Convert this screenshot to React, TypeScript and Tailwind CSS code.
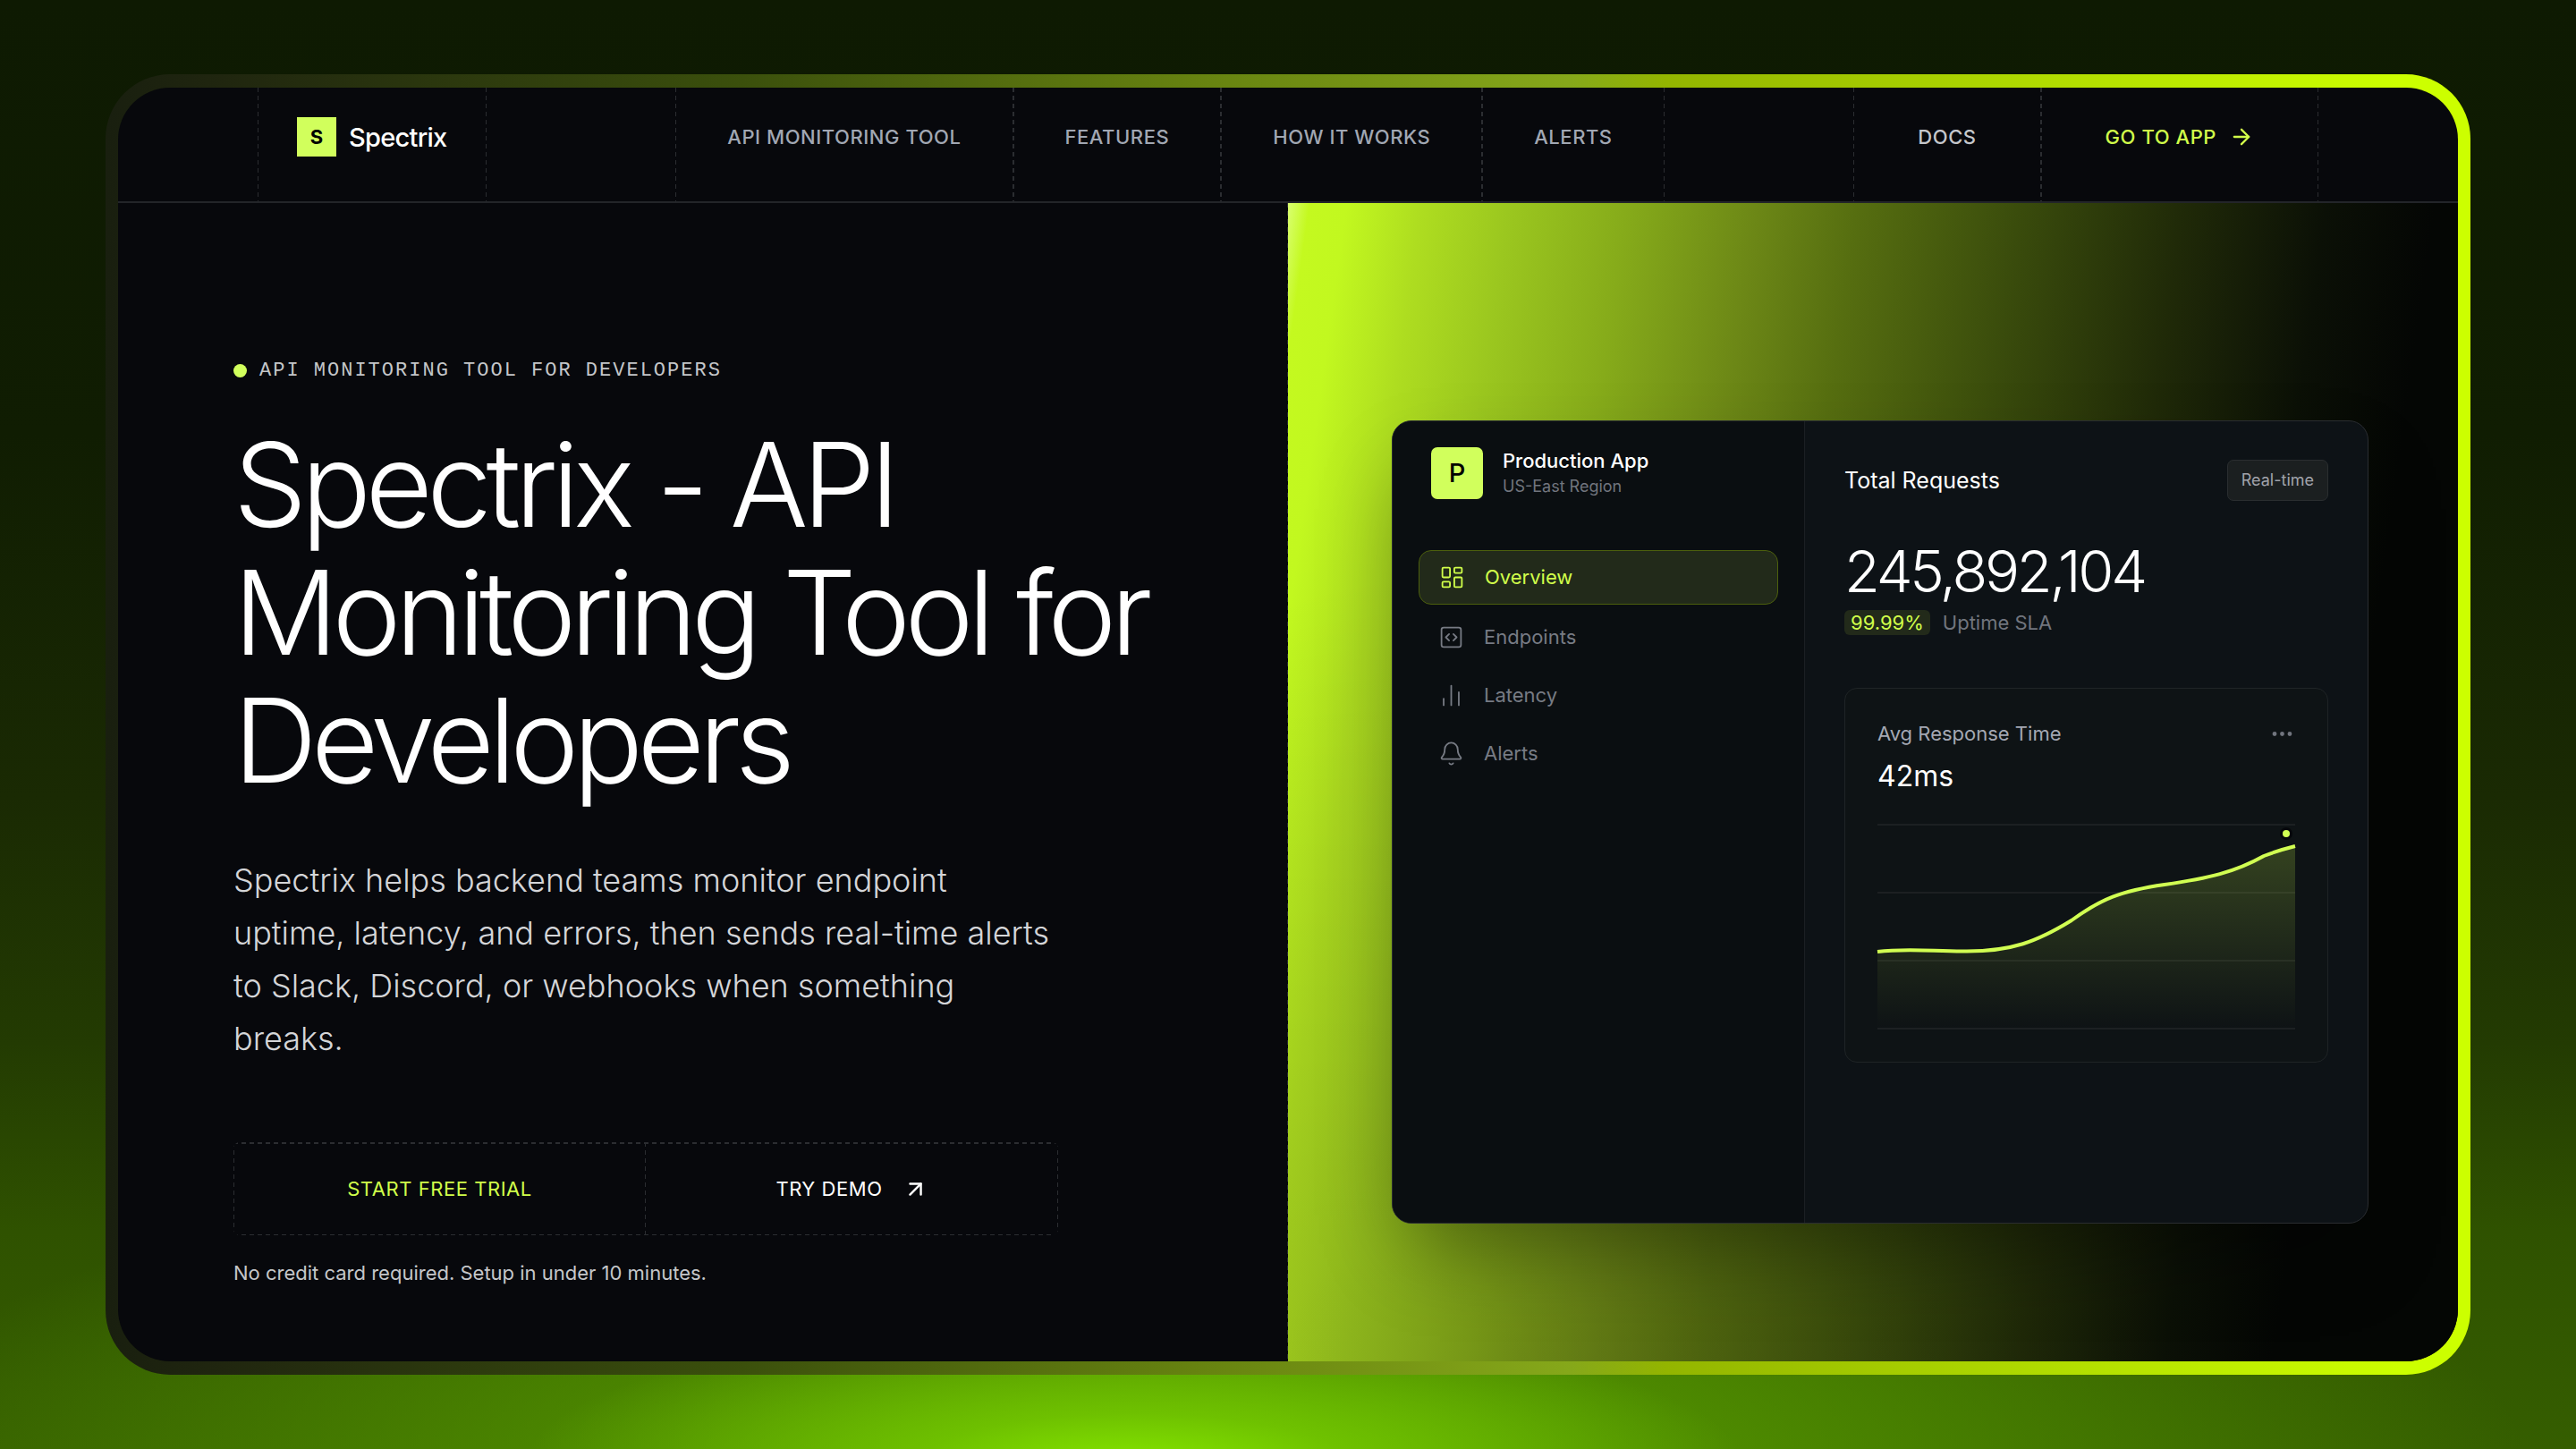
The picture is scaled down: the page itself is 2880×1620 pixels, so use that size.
import {
  ArrowRight,
  ArrowUpRight,
  Bell,
  ChartNoAxesColumn,
  Ellipsis,
  LayoutDashboard,
  SquareCode,
} from 'lucide-react';

const navLinks = [
  { label: 'API MONITORING TOOL', href: '#monitoring' },
  { label: 'FEATURES', href: '#features' },
  { label: 'HOW IT WORKS', href: '#how-it-works' },
  { label: 'ALERTS', href: '#alerts' },
];

const sidebarItems = [
  { label: 'Overview', icon: LayoutDashboard, active: true },
  { label: 'Endpoints', icon: SquareCode, active: false },
  { label: 'Latency', icon: ChartNoAxesColumn, active: false },
  { label: 'Alerts', icon: Bell, active: false },
];

// Hairline dashes are drawn as backgrounds, a 1px dashed border is too fine at this scale
const DASH_SIDES =
  'bg-no-repeat bg-[repeating-linear-gradient(180deg,#2b2d31_0_5px,transparent_5px_9px),repeating-linear-gradient(180deg,#2b2d31_0_5px,transparent_5px_9px)] [background-size:1px_100%] [background-position:left,right]';
const DASH_RIGHT =
  'bg-no-repeat bg-[repeating-linear-gradient(180deg,#2b2d31_0_5px,transparent_5px_9px)] [background-size:1px_100%] [background-position:right]';
const DASH_BOX =
  'bg-no-repeat bg-[repeating-linear-gradient(180deg,#2b2d31_0_5px,transparent_5px_9px),repeating-linear-gradient(180deg,#2b2d31_0_5px,transparent_5px_9px),repeating-linear-gradient(90deg,#2b2d31_0_5px,transparent_5px_9px),repeating-linear-gradient(90deg,#2b2d31_0_5px,transparent_5px_9px)] [background-size:1px_100%,1px_100%,100%_2px,100%_1px] [background-position:left,right,top,bottom]';

const LINE =
  'M0 143 C35 139 65 143 100 142.5 C150 142.5 178 132 217 108 C250 84 272 75 321 68 C370 61 400 54 432 36 C445 31 455 28 467 25';

function Header() {
  return (
    <header className="border-b-2 border-[#232529]">
      <div className="mx-auto flex h-[127px] max-w-[2304px] justify-between text-[22px] leading-[29px] font-medium">
        <a href="#home" className={`flex items-center gap-[14px] px-[44px] pb-[17px] ${DASH_SIDES}`}>
          <span className="flex size-[44px] items-center justify-center bg-[#d1ff5c] text-[22px] font-bold text-black">
            S
          </span>
          <span className="text-[29px] tracking-tight text-white">Spectrix</span>
        </a>

        <nav className="flex tracking-wide text-[#a1a7b3]">
          {navLinks.map((link) => (
            <a
              key={link.label}
              href={link.href}
              className={`flex items-center px-[58px] pb-[17px] ${DASH_SIDES}`}
            >
              {link.label}
            </a>
          ))}
        </nav>

        <div className="flex tracking-wide">
          <a href="#docs" className={`flex items-center px-[72px] pb-[17px] text-[#c4c6cb] ${DASH_SIDES}`}>
            DOCS
          </a>
          <a
            href="#app"
            className={`flex items-center gap-[14px] px-[72px] pb-[17px] text-[#d1ff4a] ${DASH_SIDES}`}
          >
            GO TO APP
            <ArrowRight size={28} strokeWidth={2} />
          </a>
        </div>
      </div>
    </header>
  );
}

function HeroCopy() {
  return (
    <section className={`pt-[173px] pr-[101px] pb-[84px] pl-[129px] ${DASH_RIGHT}`}>
      <div className="flex items-center gap-[14px]">
        <span className="size-[15px] rounded-full bg-[#d1ff5c]" />
        <p className="font-['Liberation_Mono',monospace] text-[22px] leading-[29px] tracking-[2px] text-[#c4c6c9]">
          API MONITORING TOOL FOR DEVELOPERS
        </p>
      </div>

      <h1 className="mt-[41px] text-[130px] leading-[143px] font-light tracking-tighter text-white">
        Spectrix - API Monitoring Tool for Developers
      </h1>

      <p className="mt-[56px] max-w-[922px] text-[36px] leading-[59px] font-light text-[#d4d5d8]">
        Spectrix helps backend teams monitor endpoint uptime, latency, and errors, then sends
        real-time alerts to Slack, Discord, or webhooks when something breaks.
      </p>

      <div
        className={`mt-[86px] grid max-w-[922px] grid-cols-2 rounded-[7px] text-[22px] leading-[32px] tracking-wide ${DASH_BOX}`}
      >
        <button
          type="button"
          className={`flex items-center justify-center py-[36px] text-[#d1ff4a] ${DASH_RIGHT}`}
        >
          START FREE TRIAL
        </button>
        <button type="button" className="flex items-center justify-center gap-[22px] py-[36px] text-white">
          TRY DEMO
          <ArrowUpRight size={29} strokeWidth={2} />
        </button>
      </div>

      <p className="mt-[28px] text-[22px] leading-[29px] text-[#c4c6c9]">
        No credit card required. Setup in under 10 minutes.
      </p>
    </section>
  );
}

function Sidebar() {
  return (
    <aside className="w-[461px] shrink-0 border-r border-[#1b1f23] bg-[#0a0e11] px-[29px] pt-[29px]">
      <div className="flex items-center gap-[22px] px-[14px]">
        <span className="flex size-[58px] items-center justify-center rounded-[7px] bg-[#d1ff5c] text-[29px] font-medium text-black">
          P
        </span>
        <div>
          <p className="text-[22px] leading-[29px] font-medium text-white">Production App</p>
          <p className="text-[18px] leading-[27px] text-[#71757e]">US-East Region</p>
        </div>
      </div>

      <nav className="mt-[57px] flex flex-col gap-[8px] text-[22px] leading-[29px]">
        {sidebarItems.map(({ label, icon: Icon, active }) => (
          <a
            key={label}
            href={`#${label.toLowerCase()}`}
            className={
              active
                ? 'flex items-center gap-[22px] rounded-[14px] border border-[#4c5f0d] bg-[#222a1a] px-[22px] py-[15px] text-[#d1ff4a]'
                : 'flex items-center gap-[22px] px-[22px] py-[14px] text-[#777b84]'
            }
          >
            <Icon size={29} strokeWidth={1.5} />
            {label}
          </a>
        ))}
      </nav>
    </aside>
  );
}

function ResponseChart() {
  return (
    <svg
      viewBox="0 0 467 230"
      preserveAspectRatio="none"
      className="mt-[28px] h-[230px] w-full overflow-visible"
      role="img"
      aria-label="Average response time"
    >
      <defs>
        <linearGradient id="area" x1="0" y1="0" x2="0" y2="1">
          <stop offset="0" stopColor="#ccff4a" stopOpacity="0.2" />
          <stop offset="1" stopColor="#ccff4a" stopOpacity="0" />
        </linearGradient>
      </defs>
      {[1, 77, 153, 229].map((y) => (
        <line key={y} x1="0" x2="467" y1={y} y2={y} stroke="#ffffff" strokeOpacity="0.06" strokeWidth="2" />
      ))}
      <path d={`${LINE} V229 H0 Z`} fill="url(#area)" />
      <path d={LINE} fill="none" stroke="#d1ff52" strokeWidth="4" />
      <circle cx="457" cy="11" r="7" fill="#05070a" />
      <circle cx="457" cy="11" r="4" fill="#d1ff52" />
    </svg>
  );
}

function Dashboard() {
  return (
    <div className="flex h-[898px] overflow-hidden rounded-[22px] border border-[#2a2d31] bg-[#0d1216] shadow-[0_45px_90px_-22px_rgba(0,0,0,0.4)]">
      <Sidebar />
      <div className="grow px-[44px] pt-[43px]">
        <div className="flex items-center justify-between">
          <h2 className="text-[25px] leading-[36px] text-white">Total Requests</h2>
          <span className="rounded-[7px] border border-[#2a2e30] bg-[#1b1f20] px-[15px] py-[8px] text-[18px] leading-[28px] text-[#a1a3ab]">
            Real-time
          </span>
        </div>

        <p className="mt-[43px] text-[65px] leading-[72px] font-light tracking-tighter text-white">245,892,104</p>
        <p className="mt-[7px] flex items-center gap-[14px] text-[22px] leading-[28px]">
          <span className="rounded-[6px] bg-[#222a1a] px-[7px] text-[#d1ff4a]">99.99%</span>
          <span className="text-[#71757e]">Uptime SLA</span>
        </p>

        <div className="mt-[59px] rounded-[14px] border border-[#1f2426] bg-[#0e1315] p-[36px]">
          <div className="flex items-center justify-between text-[22px] leading-[29px]">
            <h3 className="text-[#a4a8b3]">Avg Response Time</h3>
            <button type="button" aria-label="More options" className="text-[#71757e]">
              <Ellipsis size={29} strokeWidth={2} />
            </button>
          </div>
          <p className="mt-[8px] text-[32px] leading-[50px] text-white">42ms</p>
          <ResponseChart />
        </div>
      </div>
    </div>
  );
}

export default function App() {
  return (
    <div className="min-h-screen bg-[radial-gradient(ellipse_680px_160px_at_44%_101%,#84e400_0%,rgba(120,208,0,0.7)_35%,transparent_100%),radial-gradient(ellipse_1500px_380px_at_46%_101%,#5ea800,transparent),linear-gradient(180deg,#0e1a02_0%,#101d02_30%,#1a2a03_55%,#233b02_72%,#2f5200_85%,#355e00_100%)] px-[118px] py-[83px] font-['Inter',sans-serif] antialiased">
      <div className="rounded-[72px] bg-[linear-gradient(90deg,#191f0f_0%,#20260f_5%,#3b500c_27%,#668210_46%,#86a81a_62%,#93b500_66%,#ccff00_97%)] px-[14px] py-[15px]">
        <div className="overflow-hidden rounded-[58px] bg-[#07080c]">
          <Header />
          <main className="grid grid-cols-2">
            <HeroCopy />
            <section className="bg-[radial-gradient(ellipse_900px_900px_at_20%_100%,rgba(0,0,0,0.12),transparent),linear-gradient(98deg,#d9ff70_0px,#c4f91f_24px,#c2f81f_65px,#aedd20_148px,#9bc71f_245px,#86ab1a_375px,#6c8716_520px,#566e10_630px,#3a4c0c_810px,#202a08_990px,#0b1006_1150px,#040604_1270px)] pt-[243px] pr-[100px] pl-[116px]">
              <Dashboard />
            </section>
          </main>
        </div>
      </div>
    </div>
  );
}
